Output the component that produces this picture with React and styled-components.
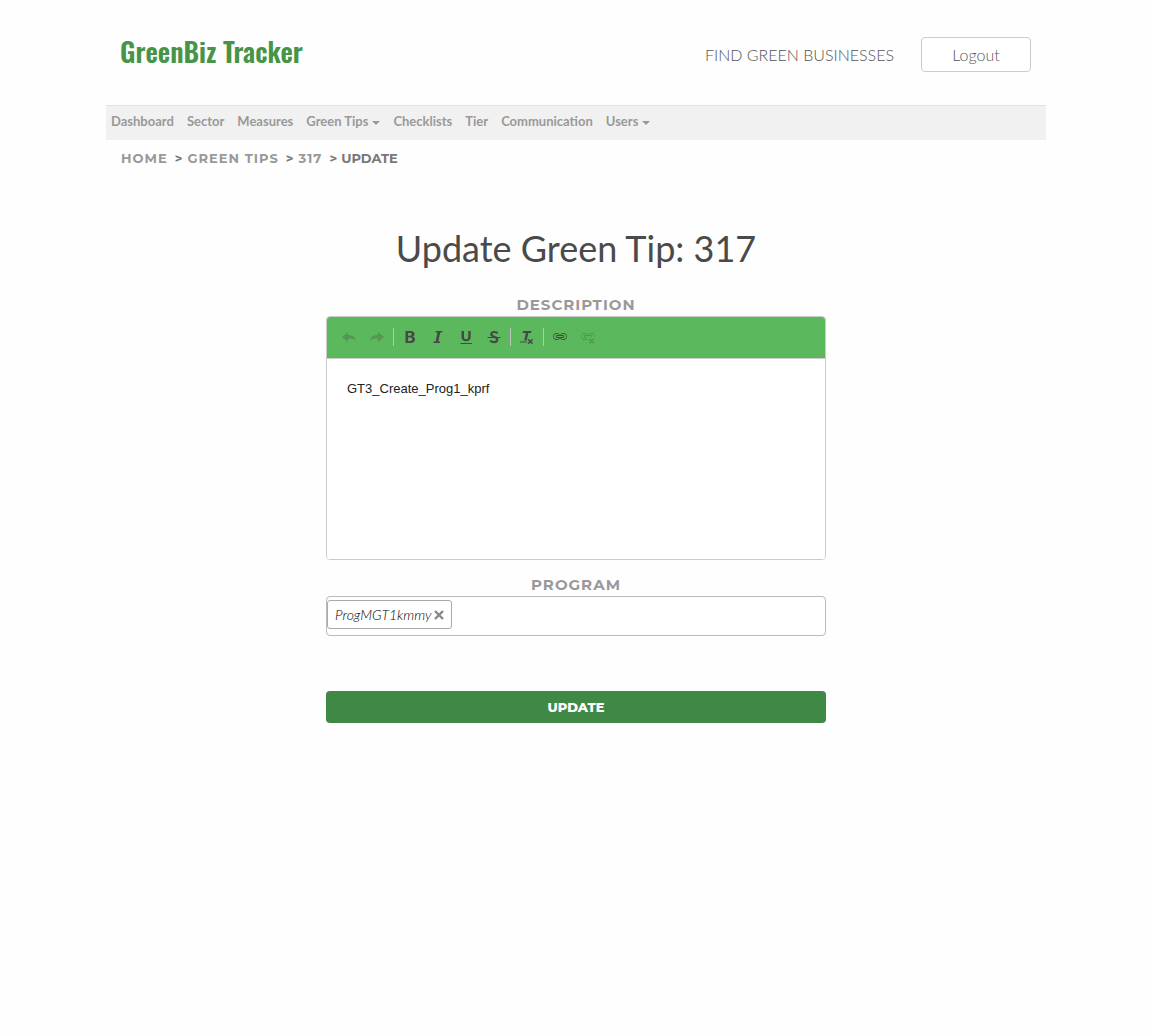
import React from "react";
import styled, { createGlobalStyle } from "styled-components";

const GlobalStyle = createGlobalStyle`
  *, *::before, *::after { box-sizing: border-box; }
  body {
    margin: 0;
    background: #fefefe;
    color: #4a4a4a;
    font-family: Lato, sans-serif;
    font-size: 16px;
  }
  button, input, textarea { font: inherit; }
  a { color: inherit; text-decoration: none; }
`;

const display = `"Montserrat", Inter, sans-serif`;

const Page = styled.div`
  max-width: 940px;
  margin: 0 auto;
`;

const Header = styled.header`
  display: flex;
  justify-content: space-between;
  align-items: center;
  height: 105px;
  padding: 4px 15px 0 14px;
`;

const Brand = styled.a`
  padding-bottom: 8px;
  color: #489446;
  font-family: "Oswald", "Liberation Sans Narrow", "DejaVu Sans Condensed", sans-serif;
  font-size: 27px;
  font-weight: 600;
  line-height: 32px;
`;

const Account = styled.div`
  display: flex;
  align-items: center;
  gap: 27px;
  color: #555;
  font-weight: 300;
`;

const LogoutButton = styled.button`
  width: 110px;
  height: 35px;
  padding: 0;
  border: 1px solid #ccc;
  border-radius: 4px;
  background: #fff;
  color: #555;
`;

const NavBar = styled.nav`
  display: flex;
  gap: 13px;
  height: 35px;
  padding: 5px 5px 9px;
  border-top: 1px solid #e3e3e3;
  background: #f1f1f1;
  color: #999;
  font-size: 13px;
  font-weight: 700;
  line-height: 20px;
`;

const NavLink = styled.a`
  display: flex;
  align-items: center;
  gap: 4px;
`;

const Caret = styled.span`
  margin-top: 4px;
  border: 4px solid transparent;
  border-top-color: currentColor;
  border-bottom: 0;
`;

const Crumbs = styled.nav`
  display: flex;
  padding: 8px 15px 10px;
  color: #999;
  font-family: ${display};
  font-size: 13px;
  font-weight: 700;
  letter-spacing: 1px;
  line-height: 20px;
`;

const Crumb = styled.span`
  color: ${(p) => (p.$current ? "#777" : "#999")};
  letter-spacing: ${(p) => (p.$current ? "normal" : "1px")};
  &:not(:first-child)::before {
    content: ">";
    margin: 0 4px 0 7px;
    color: #777;
  }
`;

const Form = styled.form`
  display: flex;
  flex-direction: column;
  max-width: 500px;
  margin: 47px auto 0;
`;

const Title = styled.h1`
  margin: 0 0 23px;
  font-size: 36px;
  font-weight: 400;
  line-height: 46px;
  text-align: center;
  white-space: nowrap;
`;

const FieldLabel = styled.label`
  color: #999;
  font-family: ${display};
  font-size: 15px;
  font-weight: 700;
  letter-spacing: 1px;
  line-height: 22px;
  text-align: center;
`;

const Editor = styled.div`
  display: flex;
  flex-direction: column;
  margin-bottom: 14px;
  border: 1px solid #ccc;
  border-radius: 4px;
  overflow: hidden;
`;

const Toolbar = styled.div`
  display: flex;
  align-items: center;
  height: 42px;
  padding: 0 8px 2px;
  border-bottom: 1px solid #ccc;
  background: #5cb85c;
`;

const ToolButton = styled.button`
  display: flex;
  padding: 6px;
  border: 0;
  background: none;
  color: #484848;
  &:disabled { opacity: 0.3; }
`;

const Divider = styled.span`
  width: 1px;
  height: 18px;
  margin: 0 2px;
  background: #c0c0c0;
`;

const EditorText = styled.textarea`
  height: 200px;
  padding: 20px;
  border: 0;
  outline: 0;
  resize: none;
  background: #fff;
  color: #222;
  font-family: "Liberation Sans", Arial, sans-serif;
  font-size: 13px;
  line-height: 20px;
`;

const TagField = styled.div`
  display: flex;
  align-items: center;
  height: 40px;
  margin-bottom: 55px;
  padding-bottom: 3px;
  border: 1px solid #bbb;
  border-radius: 4px;
  background: #fff;
`;

const Tag = styled.span`
  display: flex;
  align-items: center;
  gap: 3px;
  height: 29px;
  padding: 0 7px;
  border: 1px solid #aaa;
  border-radius: 3px;
  color: #000;
  font-size: 14px;
  font-style: italic;
  font-weight: 300;
`;

const RemoveButton = styled.button`
  display: flex;
  padding: 0;
  border: 0;
  background: none;
  color: #888;
`;

const TagInput = styled.input`
  flex: 1;
  min-width: 0;
  border: 0;
  outline: 0;
  background: none;
`;

const SubmitButton = styled.button`
  height: 32px;
  padding: 0;
  border: 0;
  border-radius: 4px;
  background: #3f8845;
  color: #fff;
  font-family: ${display};
  font-size: 13px;
  font-weight: 800;
`;

const Icon = ({ children }) => (
  <svg width="16" height="16" viewBox="0 0 16 16" fill="currentColor" aria-hidden="true">
    {children}
  </svg>
);

const line = { fill: "none", stroke: "currentColor" };

const icons = {
  undo: <path d="M1 8l6-5v3c4 0 7 1.500 8 6-2-2.300-4.500-2.800-8-2.500V13z" />,
  redo: <path d="M15 8L9 3v3c-4 0-7 1.500-8 6 2-2.300 4.500-2.800 8-2.500V13z" />,
  bold: (
    <path fillRule="evenodd" d="M3.500 2h5c2.700 0 4 1.100 4 3 0 1.300-.7 2.200-1.800 2.600 1.500.4 2.300 1.400 2.300 2.900 0 2.300-1.700 3.500-4.500 3.500h-5zM6 4v2.700h1.800c1.300 0 1.900-.5 1.900-1.400S9.100 4 7.800 4zm0 4.600V12h2.100c1.400 0 2.100-.6 2.100-1.700s-.7-1.700-2.100-1.700z" />
  ),
  italic: <path d="M5.800 2h6.700l-.3 1.600h-2L8.300 12.400h2L10 14H3.300l.3-1.600h2l1.900-8.800h-2z" />,
  underline: (
    <path d="M3.500 2H6v5.800c0 1.700.6 2.500 2.100 2.500s2.100-.8 2.100-2.500V2h2.500v6c0 2.700-1.600 4.200-4.600 4.200S3.500 10.700 3.500 8zM2.500 14h11.500v1H2.500z" />
  ),
  strike: (
    <>
      <path {...line} strokeWidth="2.200" d="M11.800 4.300C10.900 3.500 9.800 3 8.400 3 6.500 3 5.300 3.900 5.300 5.300c0 1.500 1.500 2.100 3 2.600 1.800.6 3 1.200 3 2.700 0 1.600-1.300 2.500-3.200 2.500-1.600 0-2.900-.5-3.900-1.500" />
      <path d="M1.500 8h13v1h-13z" />
    </>
  ),
  clear: (
    <>
      <path d="M4 2h8.500l-.4 1.900H9.400L7.700 11.500H5.200L6.900 3.900H3.600zM1 12.500h7v1H1z" />
      <path {...line} strokeWidth="1.600" d="M9 10.200l4.600 4.600m0-4.600L9 14.800" />
    </>
  ),
  link: (
    <>
      <path {...line} d="M7.500 9.200C7 10 6.500 10.500 5.500 10.500H4C2.500 10.500 1.500 9.200 1.500 7.500S2.500 4.500 4 4.500h1.500c1 0 1.500.5 2 1.300M8.500 5.800c.5-.8 1-1.300 2-1.300H12c1.500 0 2.500 1.300 2.500 3s-1 3-2.500 3h-1.500c-1 0-1.500-.5-2-1.300" />
      <path {...line} d="M4.500 6.500h7v2h-7z" />
    </>
  ),
  unlink: (
    <>
      <path {...line} d="M7.500 10.500H4C2.500 10.500 1.500 9.200 1.500 7.500S2.500 4.500 4 4.500h1.500c1 0 1.500.5 2 1.300M8.500 5.800c.5-.8 1-1.300 2-1.300H12c1.500 0 2.500 1.300 2.500 3M7.500 8.500h-3v-2h7v1.500" />
      <path {...line} strokeWidth="1.600" d="M9.500 9.700L14 14.200m0-4.500L9.500 14.200" />
    </>
  ),
};

const tools = [
  [{ icon: "undo", label: "Undo", disabled: true }, { icon: "redo", label: "Redo", disabled: true }],
  [
    { icon: "bold", label: "Bold" },
    { icon: "italic", label: "Italic" },
    { icon: "underline", label: "Underline" },
    { icon: "strike", label: "Strikethrough" },
  ],
  [{ icon: "clear", label: "Remove format" }],
  [{ icon: "link", label: "Link" }, { icon: "unlink", label: "Unlink", disabled: true }],
];

const navItems = [
  { label: "Dashboard" },
  { label: "Sector" },
  { label: "Measures" },
  { label: "Green Tips", menu: true },
  { label: "Checklists" },
  { label: "Tier" },
  { label: "Communication" },
  { label: "Users", menu: true },
];

export default function App() {
  return (
    <>
      <GlobalStyle />
      <Page>
        <Header>
          <Brand href="#">GreenBiz Tracker</Brand>
          <Account>
            <a href="#">FIND GREEN BUSINESSES</a>
            <LogoutButton type="button">Logout</LogoutButton>
          </Account>
        </Header>
        <NavBar>
          {navItems.map((item) => (
            <NavLink href="#" key={item.label}>
              {item.label}
              {item.menu && <Caret />}
            </NavLink>
          ))}
        </NavBar>
        <Crumbs aria-label="Breadcrumb">
          <Crumb><a href="#">HOME</a></Crumb>
          <Crumb><a href="#">GREEN TIPS</a></Crumb>
          <Crumb><a href="#">317</a></Crumb>
          <Crumb $current>UPDATE</Crumb>
        </Crumbs>
        <Form onSubmit={(e) => e.preventDefault()}>
          <Title>Update Green Tip: 317</Title>
          <FieldLabel htmlFor="description">DESCRIPTION</FieldLabel>
          <Editor>
            <Toolbar>
              {tools.map((group, i) => (
                <React.Fragment key={i}>
                  {i > 0 && <Divider />}
                  {group.map((tool) => (
                    <ToolButton type="button" key={tool.icon} aria-label={tool.label} disabled={tool.disabled}>
                      <Icon>{icons[tool.icon]}</Icon>
                    </ToolButton>
                  ))}
                </React.Fragment>
              ))}
            </Toolbar>
            <EditorText id="description" defaultValue="GT3_Create_Prog1_kprf" spellCheck={false} />
          </Editor>
          <FieldLabel htmlFor="program">PROGRAM</FieldLabel>
          <TagField>
            <Tag>
              ProgMGT1kmmy
              <RemoveButton type="button" aria-label="Remove ProgMGT1kmmy">
                <svg width="10" height="10" viewBox="0 0 10 10" aria-hidden="true">
                  <path d="M1 1l8 8M9 1L1 9" stroke="currentColor" strokeWidth="2.400" />
                </svg>
              </RemoveButton>
            </Tag>
            <TagInput id="program" />
          </TagField>
          <SubmitButton type="submit">UPDATE</SubmitButton>
        </Form>
      </Page>
    </>
  );
}
